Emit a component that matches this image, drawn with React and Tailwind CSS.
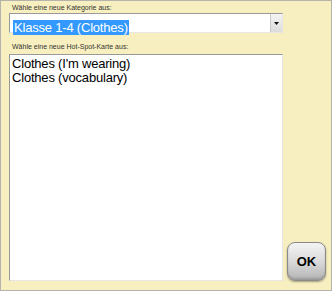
export default function App() {
  return (
    <div className="w-[332px] h-[291px] border border-[#b4b4ac] bg-[#f7efbf] flex pl-[8px] box-border font-['Liberation_Sans',Arial,sans-serif]">
      <div className="w-[274px] flex flex-col">
        <div className="mt-[2px] h-[10px] pl-[3px] text-[7px] leading-[10px] text-[#333]">
          Wähle eine neue Kategorie aus:
        </div>
        <div className="h-[20px] flex bg-white border border-t-[#999] border-l-[#999] border-b-[#e6e6e6] border-r-[#e6e6e6]">
          <div className="flex-1 pl-[3px] pt-[1px]">
            <span className="inline-block bg-[#3399ff] text-white text-[13px] leading-[15px] px-[1px] tracking-[-0.2px]">
              Klasse 1-4 (Clothes)
            </span>
          </div>
          <div className="w-[12px] flex items-center justify-center bg-gradient-to-b from-[#f4f4f4] to-[#dcdcdc] border-l border-[#c8c8c8]">
            <svg width="5" height="3" viewBox="0 0 5 3">
              <path d="M0 0h5L2.5 3z" fill="#111" />
            </svg>
          </div>
        </div>
        <div className="h-[21px] pt-[9px] pl-[3px] text-[7px] leading-[10px] text-[#333]">
          Wähle eine neue Hot-Spot-Karte aus:
        </div>
        <div className="flex-1 bg-white border border-t-[#999] border-l-[#999] border-b-[#e6e6e6] border-r-[#e6e6e6] pt-[2px] pl-[2px] text-[13px] leading-[14px] tracking-[-0.2px] text-black">
          <div>Clothes (I'm wearing)</div>
          <div>Clothes (vocabulary)</div>
        </div>
        <div className="h-[9px] shrink-0" />
      </div>
      <div className="flex flex-col justify-end pl-[4px] pb-[9px]">
        <button className="w-[39px] h-[39px] rounded-[8px] border border-[#8a8a8a] bg-gradient-to-b from-[#f4f4f4] via-[#dadada] to-[#b4b4b4] shadow-[0_1px_2px_rgba(0,0,0,0.35),inset_0_-2px_2px_rgba(0,0,0,0.15)] text-[13px] font-bold text-black flex items-center justify-center">
          OK
        </button>
      </div>
    </div>
  );
}
